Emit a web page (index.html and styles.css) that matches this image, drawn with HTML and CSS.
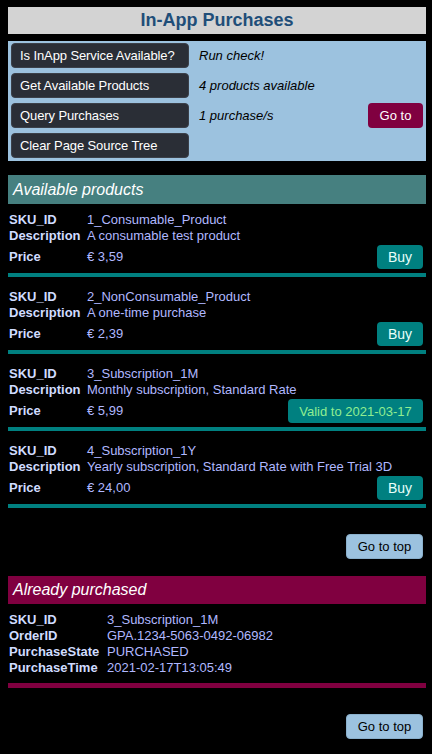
FILE: index.html
```html
<!DOCTYPE html>
<html>
<head>
<meta charset="utf-8">
<link rel="stylesheet" href="styles.css">
</head>
<body>
<h1 class="title">In-App Purchases</h1>
<div class="panel">
  <button class="btn dark">Is InApp Service Available?</button>
  <span class="status">Run check!</span>
  <span></span>
  <button class="btn dark">Get Available Products</button>
  <span class="status">4 products available</span>
  <span></span>
  <button class="btn dark">Query Purchases</button>
  <span class="status">1 purchase/s</span>
  <button class="btn maroon">Go to</button>
  <button class="btn dark">Clear Page Source Tree</button>
  <span></span>
  <span></span>
</div>

<h2 class="section teal">Available products</h2>
<div class="products">
  <div class="product">
    <div class="info">
      <span class="lbl">SKU_ID</span><span class="val">1_Consumable_Product</span>
      <span class="lbl">Description</span><span class="val">A consumable test product</span>
    </div>
    <div class="price-row">
      <span class="lbl">Price</span><span class="val">€ 3,59</span>
      <button class="btn buy">Buy</button>
    </div>
    <div class="sep teal-line"></div>
  </div>
  <div class="product">
    <div class="info">
      <span class="lbl">SKU_ID</span><span class="val">2_NonConsumable_Product</span>
      <span class="lbl">Description</span><span class="val">A one-time purchase</span>
    </div>
    <div class="price-row">
      <span class="lbl">Price</span><span class="val">€ 2,39</span>
      <button class="btn buy">Buy</button>
    </div>
    <div class="sep teal-line"></div>
  </div>
  <div class="product">
    <div class="info">
      <span class="lbl">SKU_ID</span><span class="val">3_Subscription_1M</span>
      <span class="lbl">Description</span><span class="val">Monthly subscription, Standard Rate</span>
    </div>
    <div class="price-row">
      <span class="lbl">Price</span><span class="val">€ 5,99</span>
      <button class="btn buy valid">Valid to 2021-03-17</button>
    </div>
    <div class="sep teal-line"></div>
  </div>
  <div class="product">
    <div class="info">
      <span class="lbl">SKU_ID</span><span class="val">4_Subscription_1Y</span>
      <span class="lbl">Description</span><span class="val">Yearly subscription, Standard Rate with Free Trial 3D</span>
    </div>
    <div class="price-row">
      <span class="lbl">Price</span><span class="val">€ 24,00</span>
      <button class="btn buy">Buy</button>
    </div>
    <div class="sep teal-line"></div>
  </div>
</div>
<div class="top-row"><button class="btn light">Go to top</button></div>

<h2 class="section maroon-bg">Already purchased</h2>
<div class="purchased">
  <span class="lbl">SKU_ID</span><span class="val">3_Subscription_1M</span>
  <span class="lbl">OrderID</span><span class="val">GPA.1234-5063-0492-06982</span>
  <span class="lbl">PurchaseState</span><span class="val">PURCHASED</span>
  <span class="lbl">PurchaseTime</span><span class="val">2021-02-17T13:05:49</span>
</div>
<div class="sep maroon-line"></div>
<div class="top-row"><button class="btn light">Go to top</button></div>
</body>
</html>
```
FILE: styles.css
```css
html { background: #000; }
body {
  margin: 7px 6px 0 8px;
  background: #000;
  font-family: "Liberation Sans", Arial, sans-serif;
  font-size: 13px;
  line-height: 16px;
}
.title {
  margin: 0;
  height: 27px;
  line-height: 27px;
  background: #d3d3d3;
  color: #1f4e79;
  font-size: 18px;
  font-weight: bold;
  text-align: center;
}
.panel {
  margin-top: 7px;
  background: #9cc2df;
  padding: 2px 3px 3px 3px;
  display: grid;
  grid-template-columns: 178px 1fr auto;
  grid-auto-rows: 25px;
  row-gap: 5px;
  column-gap: 10px;
  align-items: center;
}
.btn {
  font-family: "Liberation Sans", Arial, sans-serif;
  font-size: 13px;
  border-radius: 4px;
  border: 1px solid transparent;
  height: 25px;
  padding: 0 8px;
  white-space: nowrap;
  cursor: pointer;
}
.dark {
  background: #2a2e36;
  border-color: #3b4049;
  color: #fff;
  text-align: left;
  width: 178px;
  padding: 0 0 0 8px;
  letter-spacing: -0.1px;
}
.maroon {
  background: #800040;
  color: #fff;
  width: 55px;
  padding: 0;
}
.status {
  font-style: italic;
  color: #000;
  font-size: 13px;
}
.section {
  margin: 14px 0 0 0;
  height: 29px;
  line-height: 29px;
  padding-left: 5px;
  font-size: 16px;
  font-style: italic;
  font-weight: normal;
  color: #fff;
}
.teal { background: #468080; }
.maroon-bg { background: #800040; margin-top: 17px; height: 28px; line-height: 28px; }
.product { padding-top: 12px; }
.product:first-child { padding-top: 8px; }
.info {
  display: grid;
  grid-template-columns: 79px 1fr;
}
.lbl {
  color: #d0dcff;
  font-weight: bold;
  padding-left: 1px;
}
.val { color: #b0b8ff; }
.price-row {
  margin-top: 1px;
  display: grid;
  grid-template-columns: 79px 1fr auto;
  align-items: center;
  padding-right: 3px;
}
.buy {
  background: #008080;
  color: #e8fffa;
  height: 24px;
  min-width: 46px;
  padding: 0 8px;
  font-size: 14px;
}
.valid {
  color: #90ee90;
  width: 135px;
  font-size: 13px;
}
.sep { height: 4px; margin-top: 4px; }
.teal-line { background: #008080; }
.maroon-line { background: #800040; margin-top: 7px; height: 5px; }
.top-row {
  display: flex;
  justify-content: flex-end;
  padding-right: 3px;
  margin-top: 26px;
}
.light {
  background: #9cc2df;
  border-color: #8ab0cc;
  color: #000;
  width: 77px;
  padding: 0;
}
.purchased {
  margin-top: 8px;
  display: grid;
  grid-template-columns: 99px 1fr;
}
```
